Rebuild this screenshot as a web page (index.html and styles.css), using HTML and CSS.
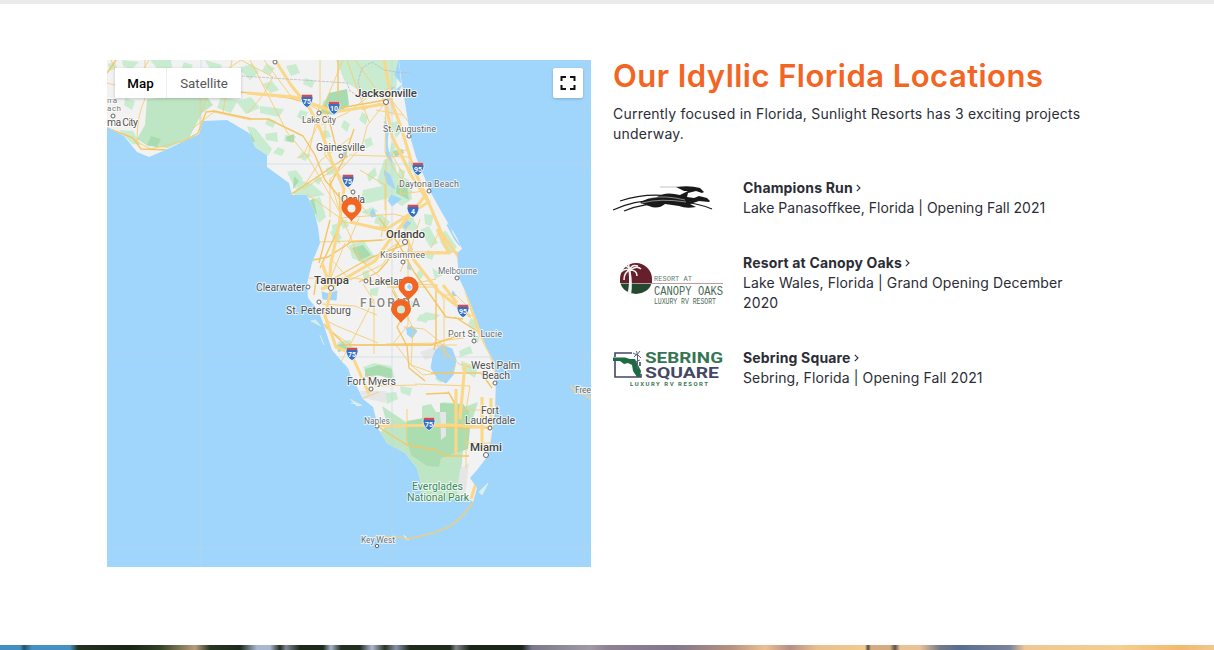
FILE: index.html
```html
<!DOCTYPE html>
<html lang="en">
<head>
<meta charset="utf-8">
<title>Our Idyllic Florida Locations</title>
<link rel="stylesheet" href="styles.css">
</head>
<body>
<main class="page">
<section class="locations">
<div class="map">
<svg class="map-canvas" viewBox="107 60 484 507">
<defs>
<clipPath id="land"><path d="M107 60H399L401 78 406 109 411 140 416 157 431 193 441 211 451 228 457 238 462 249 457 253 459 278 466 293 474 313 486 347 494 362 496 380 495 410 491 440 487 457 477 470 470 478 477 488 473 502 467 497 437 502 423 501 422 487 417 468 405 453 387 443 379 430 373 407 363 399 355 383 344 364 332 350 323 323 318 310 308 298 307 284 312 263 320 243 318 227 314 210 307 195 292 195 289 183 267 167 267 155 255 147 249 133 227 120 203 121 199 134 170 148 149 157 137 152 124 136 107 127Z"/></clipPath>
<g id="shield"><path d="M-5-6.2H5L6.1-3Q5 4 0 6.6Q-5 4-6.1-3Z" fill="#3471c6" stroke="#fff" stroke-width=".7"/><path d="M-5.2-6.2H5.2V-4H-5.2Z" fill="#d84b4b"/></g>
<g id="pin"><path d="M0 12C-2 8-10 4-10-2A10 10 0 0 1 10-2C10 4 2 8 0 12Z" fill="#f26522"/></g>
</defs>
<rect x="107" y="60" width="484" height="507" fill="#a1d6fc"/>
<path d="M316 320l-5 1 10 5M320 335l4 10M350 399l7 7 5-1M351 403l7 1M479 492l9-9-6 12zM404 535l5 5-4-1z" fill="#d9eee9" stroke="#d9eee9"/>
<g clip-path="url(#land)">
<path d="M107 60H500V510H107Z" fill="#f2f2f2"/>
<path d="M147 99L205 94 213 105 202 113 189 138 168 148 148 146 137 139 145 125Z" fill="#bfe6c4"/>
<path d="M122 60l17 2-8 8-8-4zM150 60h21l2 13h-12zM205 60l17 5-3 12-8-6zM238 68l14-4 7 8-9 8zM336 60h63l-3 30-17 4-20-4-14-8zM323 101l15-9 9 6-2 13-25 3zM236 101l15-4 9 11-14 6zM260 106l24 3-5 8-19-4zM221 97l17 3-7 13-14-5zM265 134l12-2 1 10-12-2zM285 135l11 1-3 7-9-2zM278 147l7 3-3 6-9-3zM287 172l9-2 7 9-8 10zM300 180l12 4 13 11-15 3-16-3zM312 199l8-2 6 20-7 6-6-10zM247 126l8 2 17 21-4 7-14-10zM119 130l14 1 8 14-9-1zM125 98l10 3-3 9-8-5zM384 160l-7 21 5 5-19 4-3 15 29-7 13 8 10-7-2-18-13-8-2-10-6-6zM391 123l6-2 4 11-5 6zM391 143l6-1-4 15-4-2zM367 175l8-8 2 8-8 7zM361 212l11-5 6 4-8 5zM377 214l8 3-4 8-7-2zM332 225l7-2 1 21-7-4zM349 245l15-4 11 16-9 7-14-6zM353 248l9-3 7 11-10 6zM381 214l9 8-5 9-6-5zM401 222l12-4 5 9-7 9-9-8zM424 214l10 1-3 11-6-2zM420 230l9-4 9 17-8 4zM438 233l8-2 11 16-8 8-8-12zM330 232l7-3 5 9-6 4zM323 282l8-3-5 8zM432 268l11 7-8 4zM417 318l9-6 14 3-6 5-17 1zM420 314l10 4-4 5-9-3zM370 289l9-2-2 9-7-1zM338 342l12-2 3 8-15 4zM459 351l11-5 3 7-13 4zM461 361l17 6-3 11-13-8zM363 367l11-4 17 3 4 12-14-3-13 3zM400 386l12 2-2 8-9-3zM385 393l11-1 2 7-11 5zM442 402l22 2-6 17-10-1zM471 318l7 5-3 8-7-7zM464 292l8 5-3 4z" fill="#c9ecd0"/>
<path d="M266 64l9 4-5 7-8-4zM286 66l10-2 4 9-9 3zM305 78l10 3-3 7-9-4zM262 84l10-3 7 9-9 3zM300 110l8 2-4 9-7-4zM268 118l8 3-3 7-8-4zM320 132l8-2 3 7-9 2zM344 120l6 4-3 8-6-5zM302 152l9 3-6 6-7-4zM326 168l7-2 2 8-8 1zM316 176l6 3-3 6-5-4zM362 112l6 4-2 9-7-5zM364 140l7-3 2 8-7 3zM381 72l8 4-4 8-6-4zM399 168l6 3-1 9-6-4zM408 160l5 4 2 9-6-4zM362 272l6-2 2 6-6 2zM408 300l10 3-6 6-8-3zM419 270l6 3-4 6-5-4zM384 280l7-3 3 6-7 3zM428 250l7 3-3 7-7-3zM340 222l6-3 3 7-6 3zM214 76l8-4 4 8-9 4zM184 62l9 3-4 8-8-3zM108 64l7-2 2 6-7 3zM438 374l6 3-3 6-6-4zM474 334l6 2-2 7-6-3zM379 448l9-8 11 2 4 9zM383 434l10 2-4 6z" fill="#c9ecd0"/>
<path d="M329 93l18-4 2 16-15 10-14-2zM151 136l10 3-4 8-10-2zM128 73l7 5-5 4zM250 132l5 9-4 3zM286 137l8-3 0 8-7-1zM294 176l5 5-6 8zM310 200l4-1 3 16-5-4zM393 151l9-2 2 4-9 4zM397 185l10 0 2 15-13-7zM352 248l11-3 8 10-12 6zM365 369l14-4 13 4 0 10-15-4-12 2zM337 345l7-2 4 6-10 3z" fill="#a8dcb0"/>
<path d="M382 406L387 424 381 432 372 425 372 445 406 456 424 510H475L461 486 461 473 464 441 470 427 478 402 450 412H436L431 404 422 406V430L406 422Z" fill="#bfe6c4"/>
<path d="M407 421L424 418 424 426 440 427 440 403 463 404 469 411 470 428 468 449 450 455 441 458 439 467 427 466 411 455 406 437Z" fill="#abddb0"/>
<path d="M440 412h6v24l-5 4zM360 391h26v12l-23-5zM420 352l20-7 0 10-15 5zM382 99l10-2 4 17-10 3zM404 229l9 1 1 8-10-3zM326 278l13 4-4 10-6-3zM460 469l9-6-4 35-8-5z" fill="#e6e6e6"/>
<path d="M385 117l3 17-2 15M384 121l4 8-2 26 6 7-3-10M384 170l6 5 5 14-7-5-4-11M391 195l10 4-9 7-4-6M405 236l4 6-1 10 5-3M401 225l5-5 5 3-6 6M408 263l3 7-4-2M370 213l3-4 3 7-5 1M348 207l3 0-2 8M406 329l6-3 5 5-5 7-5-4M436 350l6-5 10 4 4 11-3 15-7 8-8-4-7-11 2-11zM451 297l2-6 3 5M322 292l7 2 8-3-1 9-13-1zM344 364l4 5 4 14 4 7-6-5zM116 80l6 5-5 3M347 145l-1 13-3-5M449 220l3 13 8 13-5-6-8-15M399 60l-4 15 6 8M402 85l-10 8 7-1M395 87l-8 2 1 5" fill="#a1d6fc" stroke="#a1d6fc" stroke-width="1"/>
<g class="roads-minor">
<path d="M107 83Q132 92 149 60M111 60Q124 99 169 92M145 60v39q-8 15-8 43l14 7 36-9 7-5M193 128l21-16 37 8M200 95v36M202 112l6-19M250 60l37 72 22 27 33 57M264 60l26 35 35 18M214 78l27-18 32 17-10 18-15 18M232 60l-9 52M320 60v43l-12 54M343 60l-21 50M323 114l-20 42-6 2M325 112v43l42 58M321 125l26-12 21-16 22-8M350 138l-29 22-17 26-12 7M349 155l59 2 12 15M355 60l31 43M385 103l-18 23-5 20-17 19-15 14v38M386 103l-1 49 10 19 18 22M347 60l22 62M380 103l-18 7M390 98l20 26M376 110l27 5M391 153l12 21-3 20 25-3M386 159v58l-5 20M409 149l-17 5M307 194l33 24 54-4 19 5M303 189l42-26M360 170l25 15v25M330 180l13 42 42 6M319 242l65-2 10-7M330 258l20 22 32-15 15-20 12-21M340 213l21 48 32 27 43-9M359 218l-12 28 20 19 29-21M345 243l-15 37M309 278h45l31 5 53 2M363 284l11 17v53M374 299l-33 63M408 253v72l-16 20M391 284l22 44-2 37 12 10 18-2M420 219l-9 29-11 24M440 230l-9 18M397 252h61M387 287h50l7 13v60M320 324l31 21h106M444 295h12l25 25M404 327l20 2 15 12 25-3M396 345l15 20 20 7M365 374l9 12 43-1M386 344l55-1 8 15M456 365l-14 16M415 384l55 2-4 24M407 409v36M437 345l22 19 14 4M322 304l33 2 22 9M323 286l20-5M327 321l10 5 41 17M361 399l18-7M448 391l18 37v40M454 410h36M452 427h40M466 443h27"/>
</g>
<g class="roads-mid">
<path d="M116 60L107 73M107 128l26 10 8 11 28 1 29-17 8-21 8-1 38 8 16 0 35 17 12 19 10 25 17 20M207 94l34-2 49 6 33 9 23 0 45-8M354 129l-10 30-14 26M348 156l-56 38M338 60v35M327 112l10 39M339 192l2 31-21 45M330 220l-11 43M323 284l17-9 30-17 39-15M313 260l15-3 23-15 31-2M316 280l-2 15M359 282l19-10 9-10 11-19M379 218l19 25 16 29 32 45 17 2M324 324l21 21 86 0 26-9M392 290l13 23-8 14 10 19 2 22 16 13M431 373h50l11 15M455 317l28 18M426 394l23-1 13 22M377 426l30 19 29 5 9 6h24M407 425l55 3 29-1M436 285v55l-2 10"/>
</g>
<g class="roads-major">
<path d="M247 93l47 4 40 15 51-8M275 60l16 25 19 24 11 22 11 31 12 27-5 36-8 38-2 22M384 60l8 43 9 24 12 40 12 27 17 40 16 22 9 38 12 38 12 23 8 28-4 41-7 36-13 26-4 13M386 104l6 32 19 39 16 25M425 196l-36 45-14 20-43 25-11 3M430 201l-45 29-35-8M406 235l8 25 24 31 33 26M322 263l9 26-6 27 11 31 15 6 18 41M379 426l74-1 39 3M443 285l14 18M456 389v65M465 364l-5 55M482 397v52M491 398v30M437 229l12 24h-40"/>
</g>
<path class="grid" d="M107 164h310M107 357h390M201 60v105M392 60v390"/>
</g>
<path d="M473 502Q459 523 444 529T407 539L400 537H375" fill="none" stroke="#eccd86" stroke-width="1.7"/>
<path d="M570 386l7 6 7 2 7 5M584 392l7-1" fill="none" stroke="#e5d19e" stroke-width="2"/>
<path class="grid" d="M107 164h160M417 164H591M107 357h230M495 357H591M107 548H591M201 134V567M392 447V567M584 60V567"/>
<path d="M242 76l105 7 3 8 13 8-5-17 4-14 10-6 12 8 18 3 8-1" fill="none" stroke="#bbb" stroke-width=".8" stroke-dasharray="3 1"/>
<g class="shields">
<g transform="translate(307 101)"><use href="#shield"/><text y="3">75</text></g><g transform="translate(334 108)"><use href="#shield"/><text y="3">10</text></g><g transform="translate(418 169)"><use href="#shield"/><text y="3">95</text></g><g transform="translate(348 181)"><use href="#shield"/><text y="3">75</text></g><g transform="translate(413 211)"><use href="#shield"/><text y="3">4</text></g><g transform="translate(463 311)"><use href="#shield"/><text y="3">95</text></g><g transform="translate(352 354)"><use href="#shield"/><text y="3">75</text></g><g transform="translate(429 424)"><use href="#shield"/><text y="3">75</text></g>
</g>
<g class="towns"><circle cx="275" cy="62" r="2"/><circle cx="113" cy="116" r="2"/><circle cx="319" cy="113" r="2"/><circle cx="386" cy="102" r="2.5"/><circle cx="409" cy="136" r="2"/><circle cx="341" cy="156" r="2"/><circle cx="429" cy="191" r="2"/><circle cx="353" cy="192" r="2"/><circle cx="405" cy="242" r="2.5"/><circle cx="403" cy="262" r="2"/><circle cx="457" cy="278" r="2"/><circle cx="366" cy="281" r="2"/><circle cx="308" cy="287" r="2"/><circle cx="331" cy="288" r="2.5"/><circle cx="319" cy="302" r="2"/><circle cx="474" cy="341" r="2"/><circle cx="371" cy="389" r="2"/><circle cx="495" cy="383" r="2"/><circle cx="377" cy="426" r="2"/><circle cx="490" cy="428" r="2"/><circle cx="486" cy="455" r="2.5"/><circle cx="377" cy="546" r="1.7"/></g>
<g class="labels">
<text class="beach" x="107" y="103" textLength="10">ma</text><text class="beach" x="107" y="111" textLength="14">ach</text><text x="107" y="126" textLength="31">ma City</text>
<text class="small" x="302" y="123" textLength="34">Lake City</text><text class="city" x="355" y="97" textLength="62">Jacksonville</text><text class="small" x="383" y="132" textLength="53">St. Augustine</text><text x="316" y="151" textLength="49">Gainesville</text><text class="small" x="399" y="187" textLength="60">Daytona Beach</text><text x="341" y="203" textLength="24">Ocala</text><text class="city" x="386" y="238" textLength="39">Orlando</text><text class="small" x="380" y="258" textLength="45">Kissimmee</text><text class="tiny" x="438" y="274" textLength="39">Melbourne</text><text x="369" y="285" textLength="41">Lakeland</text><text class="city" x="314" y="284" textLength="35">Tampa</text><text x="256" y="291" textLength="49">Clearwater</text><text x="286" y="314" textLength="65">St. Petersburg</text><text class="state" x="360" y="307" textLength="60">FLORIDA</text><text class="small" x="448" y="337" textLength="54">Port St. Lucie</text><text x="471" y="369" textLength="49">West Palm</text><text x="482" y="378.500" textLength="28">Beach</text><text x="347" y="385" textLength="49">Fort Myers</text><text class="small" x="575" y="393" textLength="16">Free</text><text x="481" y="414" textLength="18">Fort</text><text x="465" y="424" textLength="50">Lauderdale</text><text class="tiny" x="364" y="424" textLength="26">Naples</text><text class="city" x="470" y="451" textLength="32">Miami</text><text class="park" x="412" y="490" textLength="51">Everglades</text><text class="park" x="407" y="500.500" textLength="62">National Park</text><text class="tiny" x="361" y="543" textLength="34">Key West</text>
</g>
<g><use href="#pin" x="351.500" y="209.500"/><circle cx="351.500" cy="208.500" r="4" fill="#f1f3ed"/><use href="#pin" x="408.500" y="288.500"/><circle cx="408.500" cy="287" r="4" fill="#eaf5fa"/><path d="M409 284l3 3-2 3-3-3z" fill="#a1d6fc"/><use href="#pin" x="401" y="311"/><circle cx="401" cy="309.500" r="4" fill="#cfe9d3"/></g>
</svg>
<div class="map-types"><button class="map-type is-active">Map</button><button class="map-type">Satellite</button></div>
<button class="fullscreen" aria-label="Toggle fullscreen"><svg width="16" height="14" viewBox="0 0 16 14"><path d="M1.500 5V1H6M10 1h4.500V5M14.500 9v4H10M6 13H1.500V9" fill="none" stroke="#111" stroke-width="2"/></svg></button>
</div>
<div class="details">
<h1>Our Idyllic Florida Locations</h1>
<p class="intro">Currently focused in Florida, Sunlight Resorts has 3 exciting projects<br>underway.</p>
<ul class="resorts">
<li><svg class="logo" viewBox="613 178 110 40" fill="#191919"><path d="M640 203Q646 198 657 197 665 191 680 195L688 191 684 191 680 189 676 187Q690 185 700 188L704 192 702 193 696 191 688 193 687 197 694 198 699 196 707 198 710 201 709 202 699 201 690 204 696 207Q686 209 679 206L665 204Q658 210 649 206Z"/><path d="M613 210Q640 197 675 201 698 203 712 209M624 211Q650 200 690 203M620 201Q650 191 682 198" fill="none" stroke="#191919" stroke-width="1.200"/><path d="M660 187H677" stroke="#999" stroke-width=".6"/><path d="M642 203Q660 198 686 202M650 198Q665 195 685 200" fill="none" stroke="#fff" stroke-width=".5"/></svg><div><a class="name">Champions Run<svg class="chevron" viewBox="0 0 5 8"><path d="M.8.8L4 4 .8 7.200"/></svg></a><p class="line-one">Lake Panasoffkee, Florida | Opening Fall 2021</p></div></li>
<li><svg class="logo" viewBox="613 253 110 60"><path d="M620 283A16 16 0 0 1 652 283Z" transform="translate(0 -4)" fill="#65202b"/><path d="M620 279H652V283H620Z" fill="#65202b"/><path d="M620.500 283.500A16 14 0 0 0 651.500 283.500Z" fill="#234a31"/><path d="M636 283.500H723" stroke="#be9ca0"/><path d="M627.500 294Q630 283 628.500 271L630.500 270Q633 284 631 295Z" fill="#f6f6f4"/><path d="M630 271Q626 267 621 272M630 270Q627 265 623 266M630 270Q631 264 638 266M630 270Q637 265 641 269M630 270Q624 272 624 280M630 270Q637 270 637 276M630 270Q628 265 629 263" fill="none" stroke="#f6f6f4" stroke-width="1.500"/><g class="canopy-type"><text x="654" y="281" font-size="8" textLength="38" lengthAdjust="spacingAndGlyphs" fill="#667e71">RESORT AT</text><text x="654" y="295" font-size="12" textLength="69" lengthAdjust="spacingAndGlyphs">CANOPY OAKS</text><text x="654" y="303.500" font-size="8.500" textLength="62" lengthAdjust="spacingAndGlyphs">LUXURY RV RESORT</text></g></svg><div><a class="name">Resort at Canopy Oaks<svg class="chevron" viewBox="0 0 5 8"><path d="M.8.8L4 4 .8 7.200"/></svg></a><p class="line-two">Lake Wales, Florida | Grand Opening December<br>2020</p></div></li>
<li><svg class="logo" viewBox="613 348 110 40"><path d="M615 357V353H632M615 361V377H641V374M640 366V362" fill="none" stroke="#414567" stroke-width="1.600"/><path d="M613 357.500H625L630 359H635L639 367 641 371 640 377H637L633 371 632 365 628 363 624 364 620 361H613Z" fill="#1d6a43"/><path d="M637.500 354v15M633 353l4 2 3-4M634 357l3-3 4 4M636.500 351l1 4M635 362l5-2" stroke="#5b5c84" stroke-width="1" fill="none"/><g class="sebring-type"><text x="645" y="363" font-size="14" textLength="78" lengthAdjust="spacingAndGlyphs" fill="#367553">SEBRING</text><text x="645" y="377.500" font-size="14" textLength="74" lengthAdjust="spacingAndGlyphs" fill="#444866">SQUARE</text><text x="630" y="385.500" font-size="6" textLength="78" fill="#397652">LUXURY RV RESORT</text></g></svg><div><a class="name">Sebring Square<svg class="chevron" viewBox="0 0 5 8"><path d="M.8.8L4 4 .8 7.200"/></svg></a><p class="line-three">Sebring, Florida | Opening Fall 2021</p></div></li>
</ul>
</div>
</section>
<div class="sunset"></div>
</main>
</body>
</html>
```
FILE: styles.css
```css
* { box-sizing: border-box; }
body { margin: 0; background: #fff; color: #2b2d36; font-family: Inter, sans-serif; }
.page { display: flex; flex-direction: column; height: 650px; overflow: hidden; border-top: 4px solid #ebebeb; }
.locations { display: grid; grid-template-columns: 484px 490px; gap: 22px; padding: 56px 0 0 107px; flex: 1; }
.map { position: relative; width: 484px; height: 507px; }
.map-canvas { display: block; width: 484px; height: 507px; overflow: hidden; }
.roads-minor, .roads-mid, .roads-major { fill: none; stroke: #f6cd72; stroke-width: .9; stroke-linejoin: round; }
.roads-mid { stroke: #f4c665; stroke-width: 1.4; }
.roads-major { stroke: #fbd889; stroke-width: 3.1; }
.grid { fill: none; stroke: #c2d5df; stroke-width: 1; opacity: .55; }
.shields text { font: bold 7px Roboto, sans-serif; fill: #fff; text-anchor: middle; }
.towns { fill: #fff; stroke: #666; stroke-width: 1; }
.labels { font-family: Roboto, sans-serif; font-size: 10.5px; fill: #515151; stroke: #ffffffb8; stroke-width: 2px; stroke-linejoin: round; paint-order: stroke; }
.labels .small { font-size: 9px; fill: #666; }
.labels .beach { font-size: 8px; fill: #777; }
.labels .tiny { font-size: 8.5px; fill: #6c7277; }
.labels .city { font-size: 11.5px; font-weight: 500; fill: #404040; }
.labels .state { font-size: 12px; font-weight: 500; fill: #858585; }
.labels .park { fill: #388760; font-size: 10.5px; }
.map-types { position: absolute; top: 8px; left: 8px; display: flex; background: #fff; box-shadow: 0 1px 3px #0003; }
.map-type { width: 52px; height: 30px; padding: 0; border: 0; border-right: 1px solid #eee; background: #fff; color: #565656; font: 13.3px Roboto, sans-serif; }
.map-type.is-active { color: #000; font-weight: 500; }
.map-type:last-child { width: 74px; border: 0; }
.fullscreen { position: absolute; top: 8px; right: 8px; display: grid; place-items: center; width: 30px; height: 30px; padding: 0; border: 0; border-radius: 2px; background: #fff; box-shadow: 0 1px 3px #0003; }
.details { font-size: 14px; line-height: 20px; white-space: nowrap; }
h1 { margin: 0; color: #f26522; font-size: 31px; line-height: 32px; font-weight: 600; letter-spacing: .46px; }
p { margin: 0; }
.intro { margin-top: 12px; letter-spacing: .215px; }
.resorts { display: flex; flex-direction: column; gap: 35px; margin: 34px 0 0; padding: 0; list-style: none; }
.resorts li { display: grid; grid-template-columns: 110px 1fr; column-gap: 20px; align-items: start; }
.logo { display: block; width: 110px; overflow: visible; }
.name { display: flex; align-items: center; gap: 3px; font-weight: 700; letter-spacing: .16px; }
.line-one { letter-spacing: .02px; }
.line-two { letter-spacing: .13px; }
.line-three { letter-spacing: .12px; }
.chevron { width: 5px; height: 8px; fill: none; stroke: #2b2d36; stroke-width: 1.1; }
.canopy-type { font-family: "Liberation Mono", monospace; fill: #496a56; }
.sebring-type { font-family: Roboto, sans-serif; font-weight: 700; }
.sunset { height: 5px; flex: none; background: linear-gradient(90deg, #458ec2 0 20px, #24516b 24px, #4791c2 32px 70px, #223320 78px, #182614 130px, #304226 160px, #b89d7b 195px, #263822 210px, #1c291c 240px, #a9b8ce 257px 270px, #222e20 280px, #7e8793 286px, #1d2a19 300px 323px, #a6b5c8 331px, #223021 341px 360px, #adb9ce 372px, #273425 385px, #8793a5 396px, #1f2b1b 410px 450px, #7e8185 456px, #1c251a 470px 522px, #79788a 532px, #a19aa4 590px, #8d8194 607px, #82788b 675px, #b6917f 731px, #edbf92 765px, #b59083 790px, #e9bf8d 817px, #f2ca91 865px, #54473f 868px, #d5ac80 871px 890px, #5e5048 895px, #e9c295 900px 920px, #757989 940px, #566e91 960px, #7c839b 1010px, #efc793 1025px, #f5ce91 1120px, #f2b970 1180px, #f0c78d); }
```
